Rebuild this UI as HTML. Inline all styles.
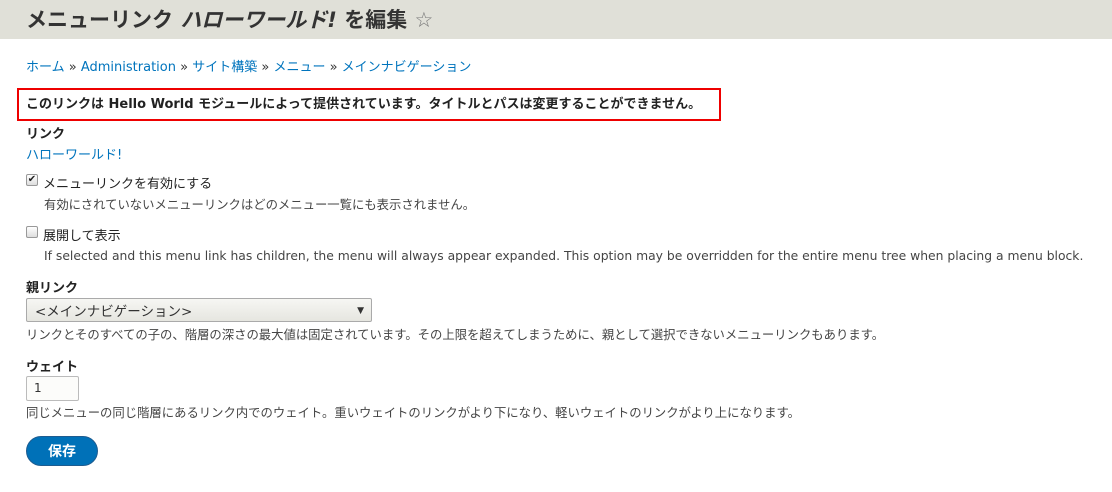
<!DOCTYPE html>
<html><head><meta charset="utf-8"><style>
*{margin:0;padding:0;box-sizing:border-box}
body{width:1112px;height:492px;background:#fff;font-family:"DejaVu Sans","Noto Sans CJK JP",sans-serif;color:#222;position:relative;overflow:hidden;font-size:13px}
.a{position:absolute;white-space:nowrap}
.hd{position:absolute;left:0;top:0;width:1112px;height:39px;background:#e0e0d8}
a{color:#0074bd;text-decoration:none}
.d{font-size:12.35px;color:#444}
.b{font-weight:bold}
.cb{position:absolute;width:12px;height:12px;border:1px solid #999;border-radius:2px;background:linear-gradient(#fff,#ddd)}
</style></head><body>
<div class="hd"></div>
<div class="a" style="left:26px;top:4px;font-size:21px;font-weight:bold;color:#333">メニューリンク <i>ハローワールド!</i> を編集 <span style="font-weight:normal;color:#777">☆</span></div>
<div class="a" style="left:26px;top:56px;font-size:13px;color:#333"><a>ホーム</a> » <a>Administration</a> » <a>サイト構築</a> » <a>メニュー</a> » <a>メインナビゲーション</a></div>
<div class="a" style="left:17px;top:88px;width:704px;height:33px;border:2px solid #e00"></div>
<div class="a b" style="left:26px;top:93px;font-size:13px">このリンクは Hello World モジュールによって提供されています。タイトルとパスは変更することができません。</div>
<div class="a b" style="left:26px;top:123px">リンク</div>
<div class="a" style="left:26px;top:144px"><a>ハローワールド!</a></div>
<div class="cb" style="left:26px;top:174px;font-size:10px;line-height:10px;text-align:center">✔</div>
<div class="a" style="left:43px;top:173px">メニューリンクを有効にする</div>
<div class="a d" style="left:44px;top:195px">有効にされていないメニューリンクはどのメニュー一覧にも表示されません。</div>
<div class="cb" style="left:26px;top:226px"></div>
<div class="a" style="left:43px;top:225px">展開して表示</div>
<div class="a d" style="left:44px;top:249px">If selected and this menu link has children, the menu will always appear expanded. This option may be overridden for the entire menu tree when placing a menu block.</div>
<div class="a b" style="left:26px;top:277px">親リンク</div>
<div class="a" style="left:26px;top:298px;width:346px;height:24px;border:1px solid #aaa;border-radius:2px;background:linear-gradient(#f6f6f3,#e6e6e0);padding:1px 8px;font-size:13.5px;color:#333">&lt;メインナビゲーション&gt;<span style="position:absolute;right:7px;top:7px;font-size:9px">▼</span></div>
<div class="a d" style="left:26px;top:325px">リンクとそのすべての子の、階層の深さの最大値は固定されています。その上限を超えてしまうために、親として選択できないメニューリンクもあります。</div>
<div class="a b" style="left:26px;top:356px">ウェイト</div>
<div class="a" style="left:26px;top:376px;width:53px;height:25px;border:1px solid #bbb;border-radius:2px;background:#fcfcfa;padding:4px 7px;font-size:12px;color:#333">1</div>
<div class="a d" style="left:26px;top:403px">同じメニューの同じ階層にあるリンク内でのウェイト。重いウェイトのリンクがより下になり、軽いウェイトのリンクがより上になります。</div>
<div class="a b" style="left:26px;top:436px;width:72px;height:30px;border-radius:15px;background:#0071b8;border:1px solid #1e5c90;color:#fff;text-align:center;line-height:30px;font-size:14px">保存</div>
</body></html>
